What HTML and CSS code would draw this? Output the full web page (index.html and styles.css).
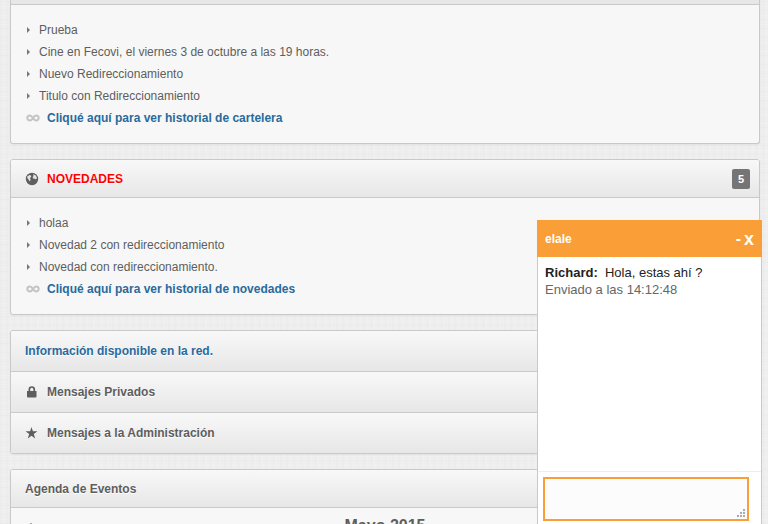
FILE: index.html
```html
<!DOCTYPE html>
<html lang="es">
<head>
<meta charset="utf-8">
<title>Novedades</title>
<link rel="stylesheet" href="styles.css">
</head>
<body>
<main class="page">
  <section class="panel">
    <div class="head head-cut"></div>
    <ul class="list">
      <li><span class="arrow"></span>Prueba</li>
      <li><span class="arrow"></span>Cine en Fecovi, el viernes 3 de octubre a las 19 horas.</li>
      <li><span class="arrow"></span>Nuevo Redireccionamiento</li>
      <li><span class="arrow"></span>Titulo con Redireccionamiento</li>
      <li><svg class="loop" viewBox="0 0 14 8"><path d="M7 4C5.800 2 5 1.500 3.800 1.500a2.500 2.500 0 0 0 0 5C5 6.500 5.800 6 7 4s2-2.500 3.200-2.500a2.500 2.500 0 0 1 0 5C9 6.500 8.200 6 7 4z"/></svg><a href="#">Cliqué aquí para ver historial de cartelera</a></li>
    </ul>
  </section>

  <section class="panel">
    <h2 class="head">
      <svg class="icon" viewBox="0 0 14 14"><circle cx="7" cy="7" r="6.200"/><path class="land" d="M2.200 4.500 4.500 3l1.800.7-.3 1.600-1.200.7.8 1.500-.6 2-1.200-1.600L2.300 6zM8 2.200l3 1.400 1 2.600-1.200 1.300-1.300-1-1.300.3-.6-1.700 1-1z"/></svg>
      <span class="alert">NOVEDADES</span>
      <span class="badge">5</span>
    </h2>
    <ul class="list">
      <li><span class="arrow"></span>holaa</li>
      <li><span class="arrow"></span>Novedad 2 con redireccionamiento</li>
      <li><span class="arrow"></span>Novedad con redireccionamiento.</li>
      <li><svg class="loop" viewBox="0 0 14 8"><path d="M7 4C5.800 2 5 1.500 3.800 1.500a2.500 2.500 0 0 0 0 5C5 6.500 5.800 6 7 4s2-2.500 3.200-2.500a2.500 2.500 0 0 1 0 5C9 6.500 8.200 6 7 4z"/></svg><a href="#">Cliqué aquí para ver historial de novedades</a></li>
    </ul>
  </section>

  <section class="panel">
    <h2 class="head head-tall"><a href="#">Información disponible en la red.</a></h2>
    <h2 class="head head-tall">
      <svg class="icon" viewBox="0 0 14 14"><path d="M2 6h1.500V4.500a3.300 3.300 0 0 1 6.600 0V6h1.400v5.500a1 1 0 0 1-1 1H3a1 1 0 0 1-1-1zM5.200 6h3.200V4.500a1.600 1.700 0 0 0-3.200 0z"/></svg>
      Mensajes Privados
    </h2>
    <h2 class="head head-tall">
      <svg class="icon" viewBox="0 0 14 14"><path d="m6.500 1 1.400 4.300h4.600L8.800 8l1.400 4.500-3.700-2.700-3.700 2.700L4.200 8 .5 5.300h4.600z"/></svg>
      Mensajes a la Administración
    </h2>
  </section>

  <section class="panel">
    <h2 class="head">Agenda de Eventos</h2>
    <div class="month">
      <svg class="icon prev" viewBox="0 0 14 14"><path d="m6 2 4 4v6L6 8l-4 4V6z"/></svg>
      <h3>Mayo 2015</h3>
    </div>
  </section>
</main>

<aside class="chat">
  <header class="chat-head">
    <span>elale</span>
    <span class="chat-tools"><button type="button" aria-label="Minimizar">-</button><button class="close" type="button" aria-label="Cerrar">x</button></span>
  </header>
  <div class="chat-log">
    <p class="message"><b>Richard:</b>&nbsp; Hola, estas ahí ?</p>
    <p class="sent">Enviado a las 14:12:48</p>
  </div>
  <div class="chat-form">
    <textarea aria-label="Mensaje"></textarea>
    <svg class="grip" viewBox="0 0 8 8"><path d="M6 0h2v2H6zM3 3h2v2H3zM6 3h2v2H6zM0 6h2v2H0zM3 6h2v2H3zM6 6h2v2H6z"/></svg>
  </div>
</aside>
</body>
</html>
```
FILE: styles.css
```css
* {
  box-sizing: border-box;
}

body {
  height: 100vh;
  margin: 0;
  overflow: hidden;
  color: #5e5e5e;
  font: 12px/22px "Liberation Sans", Arial, sans-serif;
  background-color: #eee;
  background-image:
    repeating-linear-gradient(90deg, rgba(0, 0, 0, 0.01) 0 1px, transparent 1px 3px, rgba(255, 255, 255, 0.12) 3px 4px, transparent 4px 7px),
    repeating-linear-gradient(0deg, rgba(0, 0, 0, 0.01) 0 1px, transparent 1px 4px, rgba(255, 255, 255, 0.12) 4px 5px, transparent 5px 9px);
}

h2,
h3,
p,
ul {
  margin: 0;
  padding: 0;
}

a {
  color: #2a6a9c;
  font-weight: bold;
  text-decoration: none;
}

.page {
  display: flex;
  flex-direction: column;
  gap: 15px;
  padding: 0 8px 0 10px;
}

.panel {
  overflow: hidden;
  background: #f7f7f7;
  border: 1px solid #c9c9c9;
  border-radius: 3px;
  box-shadow: 0 1px 2px rgba(0, 0, 0, 0.05);
}

.panel:first-child {
  border-top: 0;
  border-radius: 0 0 3px 3px;
}

.head {
  display: flex;
  align-items: center;
  gap: 8px;
  height: 38px;
  padding: 0 9px 0 14px;
  font-size: 12px;
  text-shadow: 0 1px 0 #fff;
  background: linear-gradient(#f8f8f8, #e7e7e7);
  border-bottom: 1px solid #c9c9c9;
}

.head-cut {
  height: 5px;
  background: #e7e7e7;
}

.head-tall {
  height: 41px;
}

.head-tall:last-child {
  height: 40px;
  border-bottom: 0;
}

.alert {
  color: #f00;
}

.badge {
  min-width: 18px;
  margin-left: auto;
  color: #fff;
  font-size: 11px;
  line-height: 20px;
  text-align: center;
  text-shadow: none;
  background: #757575;
  border-radius: 2px;
}

.icon {
  width: 14px;
  height: 14px;
  fill: #5e5e5e;
}

.land {
  fill: #e4e4e4;
}

.list {
  padding: 14px 15px;
  list-style: none;
}

.list li {
  display: flex;
  align-items: center;
}

.arrow {
  margin: 0 9px 0 1px;
  border: 3px solid transparent;
  border-right: 0;
  border-left: 3px solid #777;
}

.loop {
  width: 14px;
  height: 8px;
  margin-right: 7px;
  fill: none;
  stroke: #c4c4c4;
  stroke-width: 2;
}

.month {
  display: grid;
  grid-template-columns: 14px 1fr 14px;
  padding: 8px 14px;
}

.prev {
  margin-top: 5px;
}

.month h3 {
  font-size: 16px;
  line-height: 20px;
  text-align: center;
}

.chat {
  position: fixed;
  right: 6px;
  bottom: -4px;
  width: 225px;
  background: #fff;
  border: 1px solid #c9c9c9;
  border-top: 0;
}

.chat-head {
  display: flex;
  align-items: center;
  justify-content: space-between;
  height: 37px;
  margin: 0 -1px;
  padding: 0 8px;
  color: #fff;
  font-weight: bold;
  background: #fa9e37;
}

.chat-tools {
  display: flex;
  gap: 3px;
}

.chat-tools button {
  padding: 0;
  color: inherit;
  font: bold 16px/20px "Liberation Sans", Arial, sans-serif;
  background: none;
  border: 0;
}

.chat-tools .close {
  font-size: 18px;
}

.chat-log {
  height: 214px;
  padding: 7px;
  font-size: 13px;
  line-height: 17px;
}

.message {
  color: #222;
}

.sent {
  color: #666;
}

.chat-form {
  position: relative;
  padding: 5px 12px 6px 5px;
  border-top: 1px solid #eee;
}

.chat-form textarea {
  display: block;
  width: 100%;
  height: 44px;
  background: #fcfcfc;
  border: 2px solid #fa9e37;
  resize: none;
  outline: 0;
}

.grip {
  position: absolute;
  right: 16px;
  bottom: 10px;
  width: 8px;
  height: 8px;
  fill: #aaa;
}
```
